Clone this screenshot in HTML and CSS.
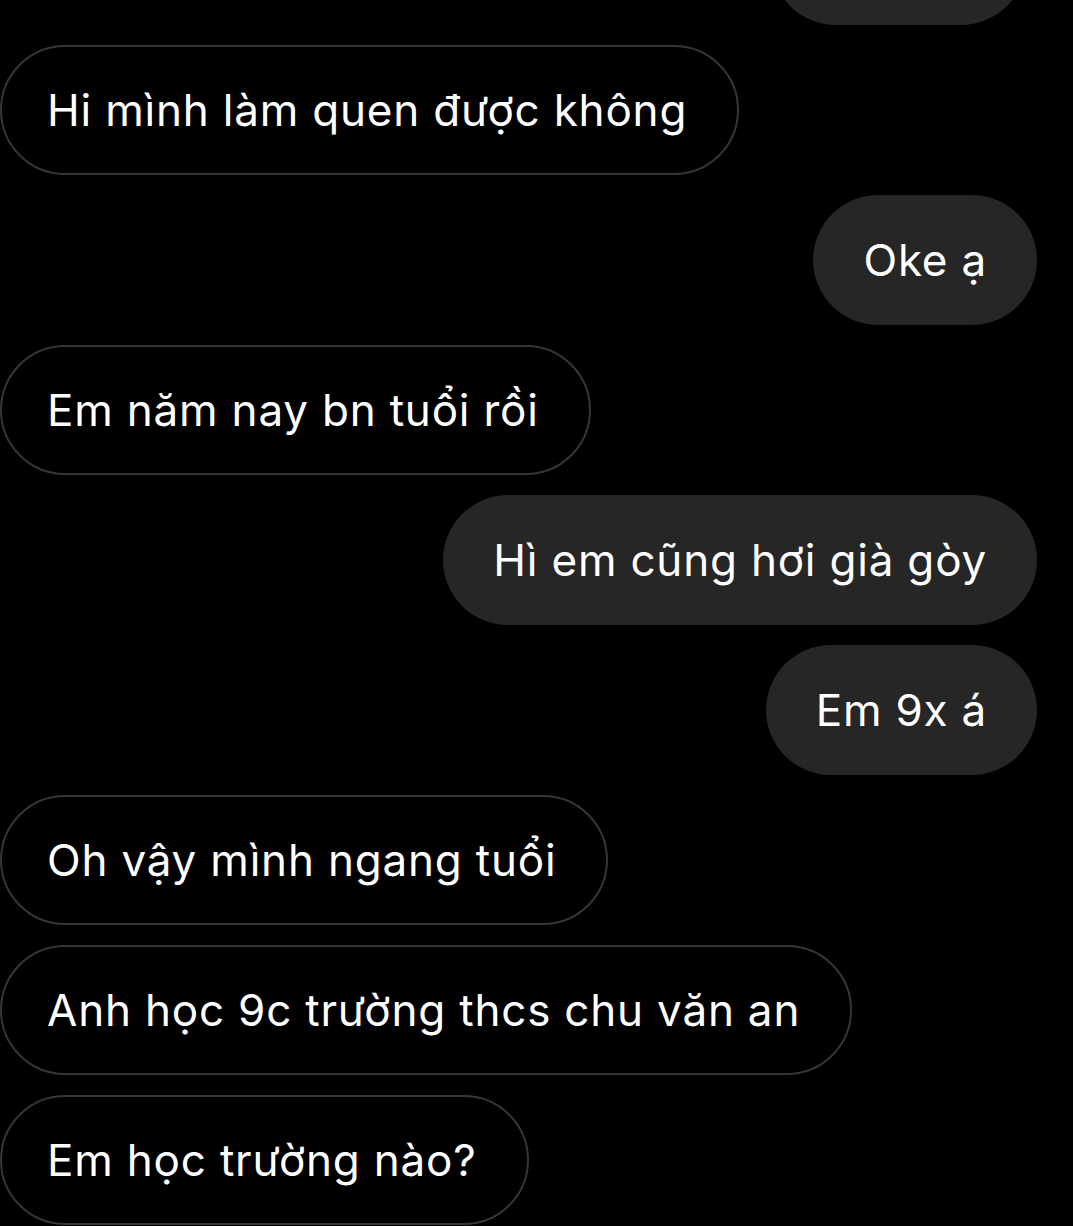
FILE: index.html
```html
<!DOCTYPE html>
<html lang="vi">
<head>
    <meta charset="UTF-8">
    <meta name="viewport" content="width=device-width, initial-scale=1.0">
    <title>Tin nhắn</title>
    <link rel="stylesheet" href="styles.css">
</head>
<body>
    <div class="chat">
        <div class="msg sent cut"></div>
        <div class="msg received">Hi mình làm quen được không</div>
        <div class="msg sent">Oke ạ</div>
        <div class="msg received">Em năm nay bn tuổi rồi</div>
        <div class="msg sent">Hì em cũng hơi già gòy</div>
        <div class="msg sent">Em 9x á</div>
        <div class="msg received">Oh vậy mình ngang tuổi</div>
        <div class="msg received">Anh học 9c trường thcs chu văn an</div>
        <div class="msg received">Em học trường nào?</div>
    </div>
</body>
</html>
```

FILE: styles.css
```css
html, body {
    background-color: #000000;
}

body {
    margin: 0;
    font-family: Inter, "Noto Sans", sans-serif;
    color: #ffffff;
    overflow: hidden;
    height: 1226px;
}

.chat {
    display: flex;
    flex-direction: column;
    gap: 20px;
    margin-top: -105px;
    padding: 0 36px 0 0;
}

.msg {
    box-sizing: border-box;
    height: 130px;
    display: flex;
    align-items: center;
    padding: 0 48px;
    border-radius: 65px;
    font-size: 44px;
    letter-spacing: 0.8px;
    white-space: nowrap;
}

.received {
    align-self: flex-start;
    border: 2px solid #363636;
    padding: 0 50px 0 45px;
}

.sent {
    align-self: flex-end;
    background-color: #262626;
    padding: 0 50px;
}

/* the top bubble is only half on screen */
.cut {
    width: 255px;
    margin-right: 11px;
}
```
